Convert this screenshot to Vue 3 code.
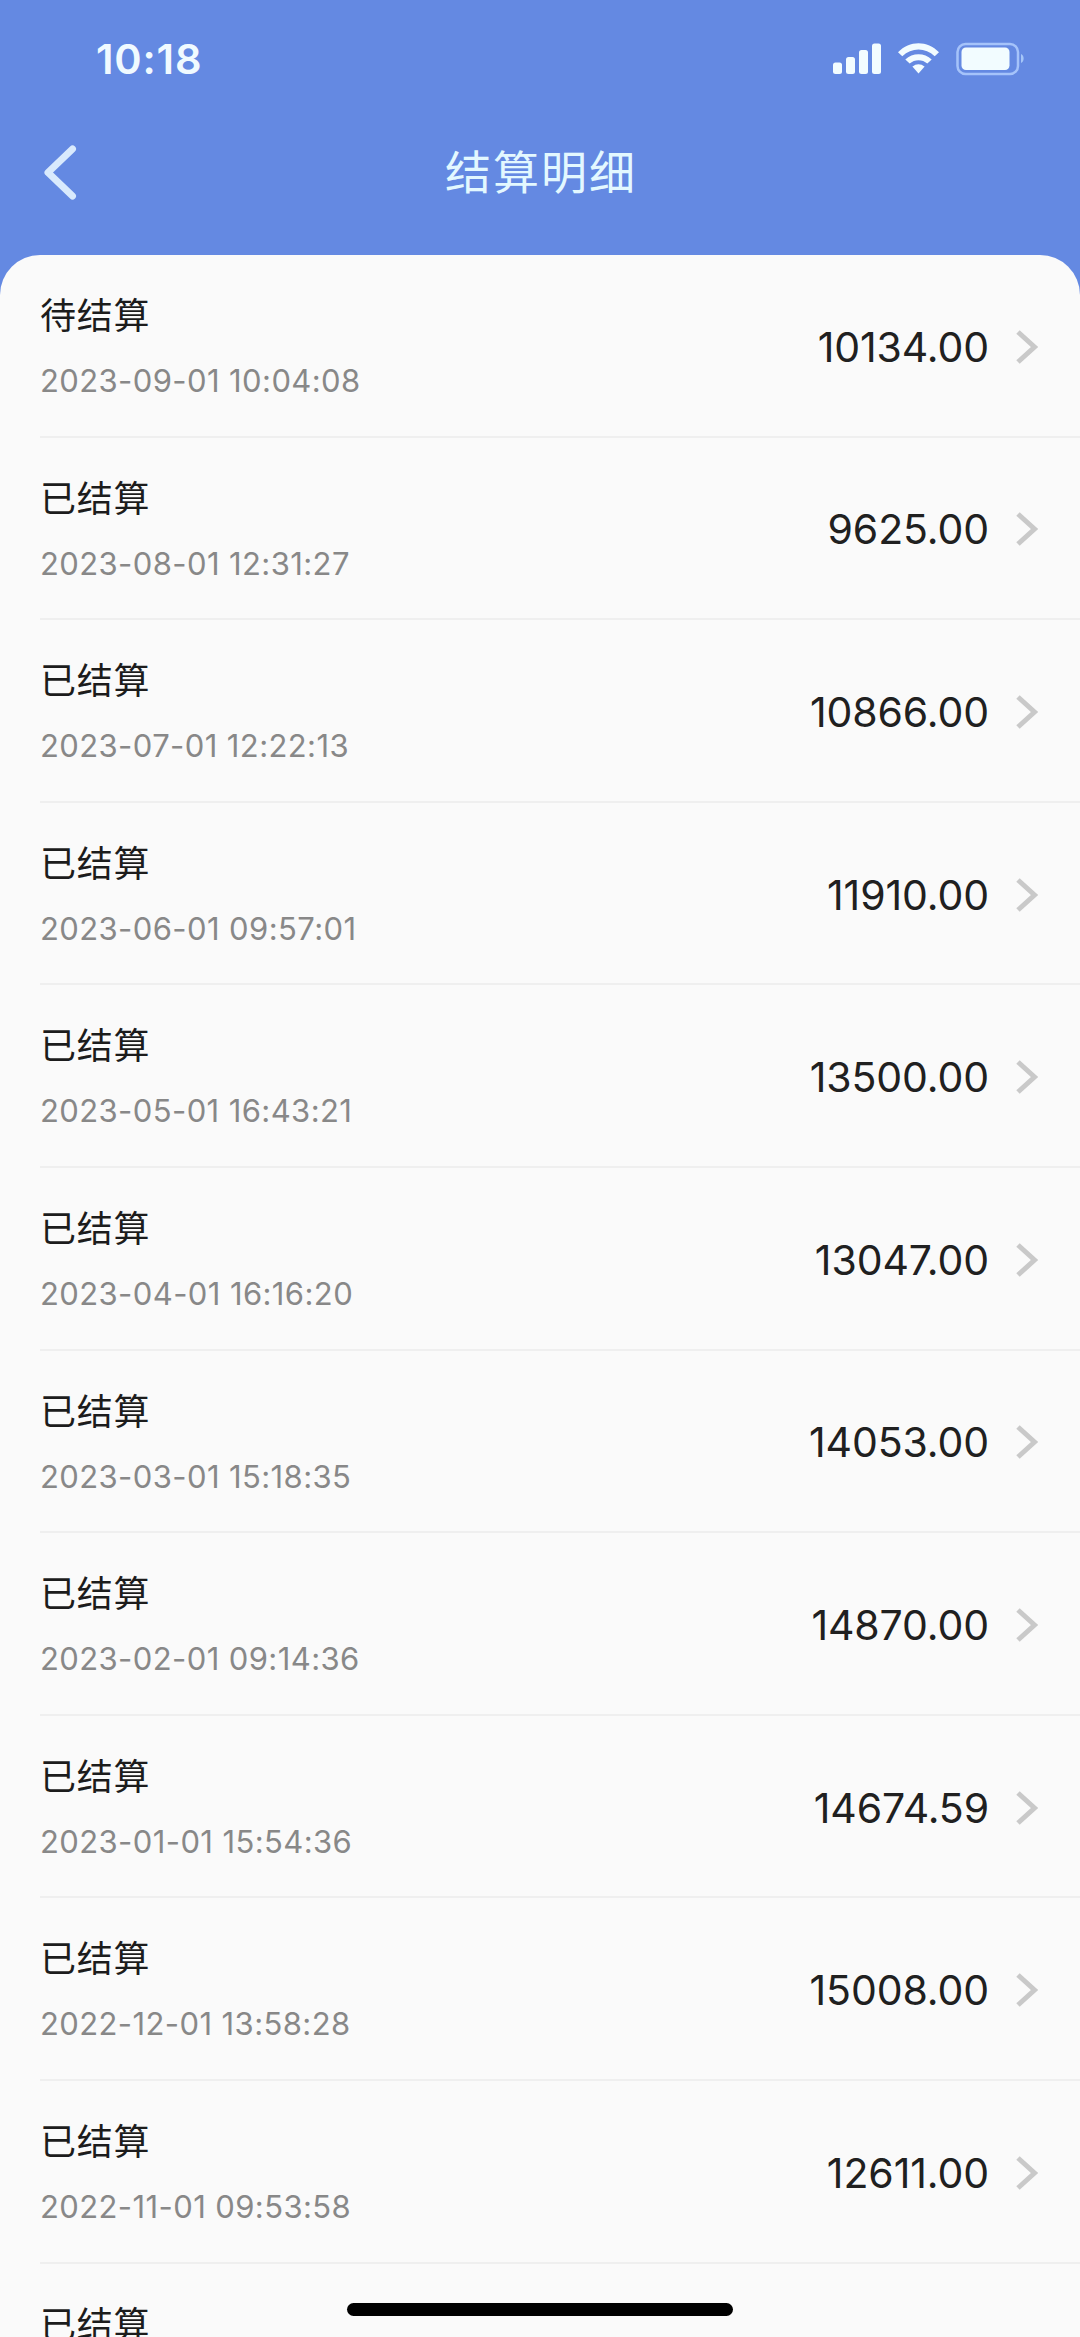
<script setup>
const rows = [
  { status: '待结算', time: '2023-09-01 10:04:08', amount: '10134.00' },
  { status: '已结算', time: '2023-08-01 12:31:27', amount: '9625.00' },
  { status: '已结算', time: '2023-07-01 12:22:13', amount: '10866.00' },
  { status: '已结算', time: '2023-06-01 09:57:01', amount: '11910.00' },
  { status: '已结算', time: '2023-05-01 16:43:21', amount: '13500.00' },
  { status: '已结算', time: '2023-04-01 16:16:20', amount: '13047.00' },
  { status: '已结算', time: '2023-03-01 15:18:35', amount: '14053.00' },
  { status: '已结算', time: '2023-02-01 09:14:36', amount: '14870.00' },
  { status: '已结算', time: '2023-01-01 15:54:36', amount: '14674.59' },
  { status: '已结算', time: '2022-12-01 13:58:28', amount: '15008.00' },
  { status: '已结算', time: '2022-11-01 09:53:58', amount: '12611.00' },
  { status: '已结算' },
]
</script>

<template>
  <div class="screen">
    <header class="top">
      <div class="status-bar">
        <span class="clock">10:18</span>
        <svg class="indicators" width="194" height="34" viewBox="0 0 194 34">
          <g fill="#f2fcff">
            <rect x="1" y="20.5" width="9" height="11.5" rx="2.5" />
            <rect x="14" y="15" width="9" height="17" rx="2.5" />
            <rect x="27" y="8" width="9" height="24" rx="2.5" />
            <rect x="40" y="1.5" width="9" height="30.5" rx="2.5" />
            <path d="M66 10.3C77.600-1.8 95.4-1.8 107 10.3L102.7 14.3C93.5 5.3 79.5 5.3 70.3 14.3Z" />
            <path d="M73.3 17.5C80.5 10.5 92.5 10.5 99.7 17.5L95.3 21.5C90.5 17 82.5 17 77.7 21.5Z" />
            <path d="M80.4 24.6C84 21.3 89 21.3 92.6 24.6L86.5 31.5Z" />
            <rect x="129.500" y="5.5" width="48" height="22.5" rx="4.5" />
            <path d="M189 12c3.500 1.500 3.500 7.500 0 9Z" fill="#a5c6f8" />
          </g>
          <rect x="125.5" y="2" width="60.5" height="30" rx="8" fill="none" stroke="#a5c3fa" stroke-width="2.5" />
        </svg>
      </div>
      <nav class="nav">
        <svg class="back" width="40" height="60" viewBox="0 0 40 60">
          <path d="M31.500 7L7 30.500L31.500 54" fill="none" stroke="#d9eafd" stroke-width="7" stroke-linecap="round" stroke-linejoin="round" />
        </svg>
        <h1 class="heading">结算明细</h1>
      </nav>
    </header>

    <main class="panel">
      <div v-for="(row, i) in rows" :key="i" class="row">
        <div class="info">
          <div class="status">{{ row.status }}</div>
          <div v-if="row.time" class="time">{{ row.time }}</div>
        </div>
        <template v-if="row.amount">
          <div class="amount">{{ row.amount }}</div>
          <svg class="chevron" width="24" height="36" viewBox="0 0 24 36">
            <path d="M3 3L19.500 18L3 33" fill="none" stroke="#c9c9c9" stroke-width="5" />
          </svg>
        </template>
      </div>
    </main>
    <div class="home-indicator"></div>
  </div>
</template>

<style>
body {
  margin: 0;
}
</style>

<style scoped>
.screen {
  position: relative;
  display: flex;
  flex-direction: column;
  box-sizing: border-box;
  width: 1080px;
  height: 2337px;
  overflow: hidden;
  background: #6489e2;
  font-family: Inter, "Noto Sans CJK SC", sans-serif;
}
.top {
  flex: none;
  height: 255px;
}
.status-bar {
  display: flex;
  align-items: center;
  justify-content: space-between;
  height: 118px;
  padding: 0 49px 0 96px;
}
.clock {
  color: #f0faff;
  font-size: 41.5px;
  font-weight: 600;
  line-height: 50px;
  letter-spacing: 0.8px;
}
.indicators {
  margin-right: 5.5px;
  overflow: visible;
}
.nav {
  position: relative;
  display: flex;
  align-items: center;
  justify-content: center;
  height: 108px;
}
.back {
  position: absolute;
  left: 41px;
  top: 24px;
}
.heading {
  margin: 0 0 0 2px;
  color: #e3f8ff;
  font-size: 46px;
  font-weight: 400;
  line-height: 60px;
  letter-spacing: 2px;
}
.panel {
  flex: 1;
  min-height: 0;
  overflow: hidden;
  border-radius: 40px 40px 0 0;
  background: #fafafa;
}
.row {
  display: flex;
  align-items: center;
  box-sizing: border-box;
  height: 182.6px;
  margin-left: 40px;
  padding: 3px 41px 0 0;
  border-bottom: 2px solid #efefef;
}
.info {
  flex: 1;
  align-self: flex-start;
  padding-top: 33px;
}
.status {
  color: #1c1c1c;
  font-size: 36px;
  line-height: 50px;
  letter-spacing: 0.8px;
}
.time {
  margin-top: 20px;
  color: #888;
  font-size: 31px;
  line-height: 40px;
  letter-spacing: 0.4px;
}
.amount {
  color: #202020;
  font-size: 41px;
  line-height: 50px;
  letter-spacing: -0.1px;
}
.chevron {
  margin-left: 26px;
}
.home-indicator {
  position: absolute;
  left: 347px;
  bottom: 21px;
  width: 386px;
  height: 13px;
  border-radius: 7px;
  background: #000;
}
</style>
